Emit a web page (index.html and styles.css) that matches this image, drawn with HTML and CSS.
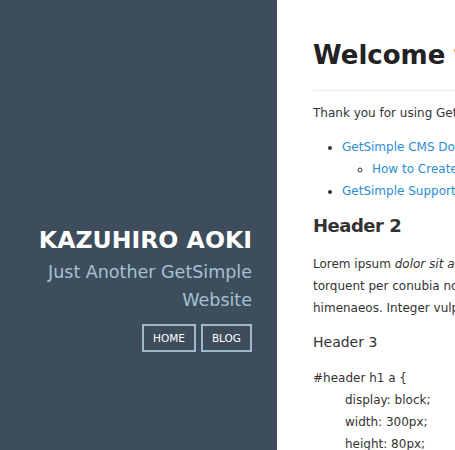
FILE: index.html
```html
<!DOCTYPE html>
<html>
<head>
<meta charset="utf-8">
<link rel="stylesheet" href="styles.css">
</head>
<body>
<div class="page">
  <header class="side">
    <div class="brand">
      <h1 class="site-title">KAZUHIRO AOKI</h1>
      <p class="tagline">Just Another GetSimple Website</p>
      <nav class="nav">
        <a class="nav-btn" href="#">HOME</a>
        <a class="nav-btn" href="#">BLOG</a>
      </nav>
    </div>
  </header>
  <main class="main">
    <h1 class="title">Welcome to GetSimple!</h1>
    <hr class="rule">
    <p class="text">Thank you for using GetSimple as your content management system.</p>
    <ul class="list">
      <li><a href="#">GetSimple CMS Documentation</a>
        <ul class="sublist">
          <li><a href="#">How to Create a Theme</a></li>
        </ul>
      </li>
      <li><a href="#">GetSimple Support Forum</a></li>
    </ul>
    <h2 class="h2">Header 2</h2>
    <p class="text text-lorem">Lorem ipsum <em>dolor sit amet</em>, consectetur adipiscing elit. Class aptent taciti sociosqu ad litora<br>torquent per conubia nostra, per inceptos<br>himenaeos. Integer vulputate sem a nibh rutrum consequat.</p>
    <h3 class="h3">Header 3</h3>
<pre class="code">#header h1 a {
	display: block;
	width: 300px;
	height: 80px;
}</pre>
  </main>
</div>
</body>
</html>
```
FILE: styles.css
```css
html, body {
  margin: 0;
  padding: 0;
  overflow: hidden;
}
body {
  font-family: "DejaVu Sans", Verdana, sans-serif;
  color: #333;
  background: #fff;
}
.page {
  display: flex;
  width: 455px;
  height: 450px;
  overflow: hidden;
}
.side {
  flex: 0 0 277px;
  background: #3d4d5b;
  display: flex;
  flex-direction: column;
  padding: 226px 25px 0 0;
  box-sizing: border-box;
}
.brand {
  text-align: right;
}
.site-title {
  margin: 0;
  font-size: 23.6px;
  line-height: 28px;
  font-weight: bold;
  color: #fff;
}
.tagline {
  margin: 4px 0 0;
  font-size: 17.5px;
  line-height: 28px;
  color: #a6c0d2;
}
.nav {
  display: flex;
  justify-content: flex-end;
  gap: 5px;
  margin-top: 10px;
}
.nav-btn {
  display: block;
  border: 2px solid #9dbbcd;
  color: #fff;
  text-decoration: none;
  font-size: 10.5px;
  line-height: 24px;
  padding: 0 9px;
}
.main {
  flex: 0 0 auto;
  width: 600px;
  padding: 38px 0 0 36px;
  white-space: nowrap;
}
.title {
  margin: 0;
  font-size: 26px;
  line-height: 34px;
  color: #222;
}
.rule {
  border: 0;
  border-top: 1px solid #eaeaea;
  margin: 18px 0 0;
}
.text {
  font-size: 12px;
  line-height: 22px;
  margin: 11px 0 0;
}
.text-lorem {
  margin-top: 14px;
}
.list {
  margin: 12px 0 0;
  padding-left: 29px;
  font-size: 12px;
  line-height: 22px;
}
.sublist {
  margin: 0;
  padding-left: 30px;
  list-style: circle;
}
.list a {
  color: #2b8dd6;
  text-decoration: none;
}
.h2 {
  margin: 11px 0 0;
  font-size: 18px;
  letter-spacing: -0.5px;
  line-height: 26px;
  color: #333;
}
.h3 {
  margin: 12px 0 0;
  font-size: 14px;
  line-height: 22px;
  font-weight: normal;
}
.code {
  font-family: "DejaVu Sans", Verdana, sans-serif;
  font-size: 12px;
  line-height: 22px;
  margin: 14px 0 0;
  tab-size: 32px;
}
```
